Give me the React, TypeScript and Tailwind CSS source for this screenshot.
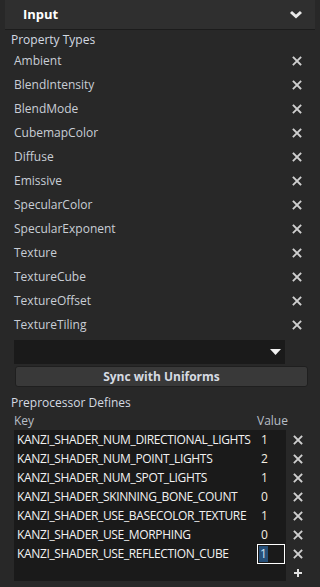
import React from "react";

const propertyTypes = [
    "Ambient",
    "BlendIntensity",
    "BlendMode",
    "CubemapColor",
    "Diffuse",
    "Emissive",
    "SpecularColor",
    "SpecularExponent",
    "Texture",
    "TextureCube",
    "TextureOffset",
    "TextureTiling",
];

const defines = [
    { key: "KANZI_SHADER_NUM_DIRECTIONAL_LIGHTS", value: "1" },
    { key: "KANZI_SHADER_NUM_POINT_LIGHTS", value: "2" },
    { key: "KANZI_SHADER_NUM_SPOT_LIGHTS", value: "1" },
    { key: "KANZI_SHADER_SKINNING_BONE_COUNT", value: "0" },
    { key: "KANZI_SHADER_USE_BASECOLOR_TEXTURE", value: "1" },
    { key: "KANZI_SHADER_USE_MORPHING", value: "0" },
    { key: "KANZI_SHADER_USE_REFLECTION_CUBE", value: "1", editing: true },
];

function CloseIcon() {
    return (
        <svg width="10" height="10" viewBox="0 0 10 10" className="block">
            <path d="M1.5 1.5 L8.5 8.5 M8.5 1.5 L1.5 8.5" stroke="#cfcfcf" strokeWidth="1.8" strokeLinecap="square" />
        </svg>
    );
}

export default function App() {
    return (
        <div className="w-[320px] h-[587px] bg-[#282828] overflow-hidden font-['Open_Sans',sans-serif] text-[12px] text-[#c9ced6]">
            {/* ===== Header ===== */}
            <div className="mx-[5px] h-[30px] bg-[#2f2f2f] border-b border-[#1c1c1c] flex items-center justify-between pl-[18px] pr-[12px]">
                <span className="text-[13px] font-bold text-white">Input</span>
                <svg width="14" height="9" viewBox="0 0 14 9" className="block">
                    <path d="M2 2 L7 6.5 L12 2" stroke="#e8e8e8" strokeWidth="3" fill="none" strokeLinejoin="miter" />
                </svg>
            </div>

            {/* ===== Property types ===== */}
            <div className="h-[19px] pl-[11px] flex items-center text-[#d4dae2]">Property Types</div>
            <div className="flex flex-col">
                {propertyTypes.map((name) => (
                    <div key={name} className="h-[24px] flex items-center justify-between pl-[14px] pr-[18px]">
                        <span>{name}</span>
                        <CloseIcon />
                    </div>
                ))}
            </div>

            {/* dropdown */}
            <div className="mt-[3px] ml-[14px] w-[271px] h-[24px] bg-[#1a1a1a] flex items-center justify-end pr-[4px]">
                <svg width="11" height="6" viewBox="0 0 11 6" className="block">
                    <path d="M0 0 H11 L5.5 6 Z" fill="#f2f2f2" />
                </svg>
            </div>

            <button className="mt-[2px] ml-[15px] w-[293px] h-[21px] bg-[#393939] border border-[#1f1f1f] rounded-[3px] flex items-center justify-center font-bold text-[#d6dbe2]">
                Sync with Uniforms
            </button>

            {/* ===== Preprocessor defines ===== */}
            <div className="mt-[7px] h-[17px] pl-[11px] flex items-center text-[#d4dae2]">Preprocessor Defines</div>
            <div className="h-[19px] flex items-end pl-[14px] text-[#b8bec6]">
                <span className="w-[243px]">Key</span>
                <span>Value</span>
            </div>
            <div className="flex">
                <div className="ml-[14px] w-[272px] h-[151px] bg-[#1a1a1a] flex flex-col">
                    {defines.map((d) => (
                        <div key={d.key} className="h-[19px] flex items-center text-[#f2f2f2]">
                            <span className="w-[243px] pl-[3px] whitespace-nowrap tracking-[-0.35px]">{d.key}</span>
                            {d.editing ? (
                                <span className="w-[28px] h-[20px] border border-white flex items-center pl-[1px]">
                                    <span className="bg-[#264f78] text-[#cfe3f5] leading-[16px] px-[1px]">{d.value}</span>
                                </span>
                            ) : (
                                <span className="pl-[4px] text-[#f4efe2]">{d.value}</span>
                            )}
                        </div>
                    ))}
                </div>
                <div className="flex flex-col pl-[7px]">
                    {defines.map((d) => (
                        <div key={d.key} className="h-[19px] flex items-center">
                            <CloseIcon />
                        </div>
                    ))}
                    <div className="h-[19px] flex items-center">
                        <svg width="10" height="10" viewBox="0 0 10 10" className="block">
                            <path d="M5 1 V9 M1 5 H9" stroke="#e0e0e0" strokeWidth="2" />
                        </svg>
                    </div>
                </div>
            </div>
        </div>
    );
}
